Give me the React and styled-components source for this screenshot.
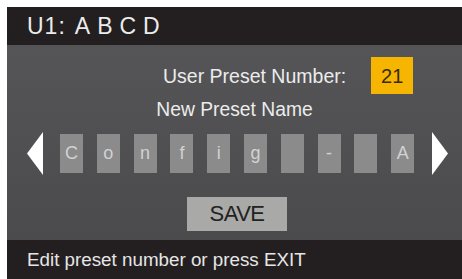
import styled, { createGlobalStyle } from 'styled-components';

const GlobalStyle = createGlobalStyle`
  html, body {
    margin: 0;
    padding: 0;
    background: #ffffff;
  }
`;

const Screen = styled.div`
  margin: 7px 0 0 7px;
  width: 455px;
  height: 272px;
  display: flex;
  flex-direction: column;
  font-family: 'Liberation Sans', Arial, sans-serif;
  overflow: hidden;
`;

const Header = styled.div`
  height: 38px;
  background: #231f20;
  color: #ececec;
  display: flex;
  align-items: center;
  padding-left: 20px;
  font-size: 23px;
  letter-spacing: 1px;
`;

const Spaced = styled.span`
  letter-spacing: 7px;
  margin-left: 9px;
`;

const Body = styled.div`
  flex: 1;
  background: linear-gradient(#555557, #4b4b4d);
  display: flex;
  flex-direction: column;
  align-items: center;
  padding-top: 12px;
  box-sizing: border-box;
`;

const PresetRow = styled.div`
  align-self: stretch;
  height: 37px;
  display: flex;
  align-items: center;
  padding-left: 156px;
  color: #ececec;
  font-size: 19.5px;
  line-height: 22px;
`;

const NumberBox = styled.div`
  margin-left: 25px;
  width: 42px;
  height: 37px;
  background: #f6b500;
  color: #3a2a05;
  font-size: 20px;
  display: flex;
  align-items: center;
  justify-content: center;
`;

const NameLabel = styled.div`
  margin-top: 5px;
  color: #ececec;
  font-size: 19.3px;
  line-height: 22px;
`;

const CharRow = styled.div`
  align-self: stretch;
  margin-top: 11px;
  height: 43px;
  display: flex;
  align-items: center;
  padding-left: 20px;
`;

const Arrow = styled.svg`
  width: 16px;
  height: 43px;
  flex: none;
`;

const Boxes = styled.div`
  display: flex;
  gap: 13.8px;
  margin: 0 18px 0 17px;
`;

const CharBox = styled.div`
  width: 23px;
  height: 39px;
  background: #8b8b8b;
  color: #d2d2d2;
  font-size: 18px;
  display: flex;
  align-items: center;
  justify-content: center;
`;

const SaveButton = styled.button`
  margin-top: 22px;
  margin-left: 5px;
  width: 100px;
  height: 34px;
  border: none;
  padding: 0;
  background: #a9a9a7;
  color: #222222;
  font-family: 'Liberation Sans', Arial, sans-serif;
  font-size: 22px;
  letter-spacing: -0.5px;
`;

const Footer = styled.div`
  height: 39px;
  background: #231f20;
  color: #e6e6e6;
  display: flex;
  align-items: center;
  padding-left: 20px;
  font-size: 18.8px;
`;

const chars = ['C', 'o', 'n', 'f', 'i', 'g', '', '-', '', 'A'];

const App = () => {
  return (
    <>
      <GlobalStyle />
      <Screen>
        <Header>
          U1:<Spaced>ABCD</Spaced>
        </Header>
        <Body>
          <PresetRow>
            User Preset Number:
            <NumberBox>21</NumberBox>
          </PresetRow>
          <NameLabel>New Preset Name</NameLabel>
          <CharRow>
            <Arrow viewBox='0 0 16 43'>
              <polygon points='16,0 16,43 0,21.5' fill='#ffffff' />
            </Arrow>
            <Boxes>
              {chars.map((c, i) => (
                <CharBox key={i}>{c}</CharBox>
              ))}
            </Boxes>
            <Arrow viewBox='0 0 16 43'>
              <polygon points='0,0 0,43 16,21.5' fill='#ffffff' />
            </Arrow>
          </CharRow>
          <SaveButton>SAVE</SaveButton>
        </Body>
        <Footer>Edit preset number or press EXIT</Footer>
      </Screen>
    </>
  );
};

export default App;
